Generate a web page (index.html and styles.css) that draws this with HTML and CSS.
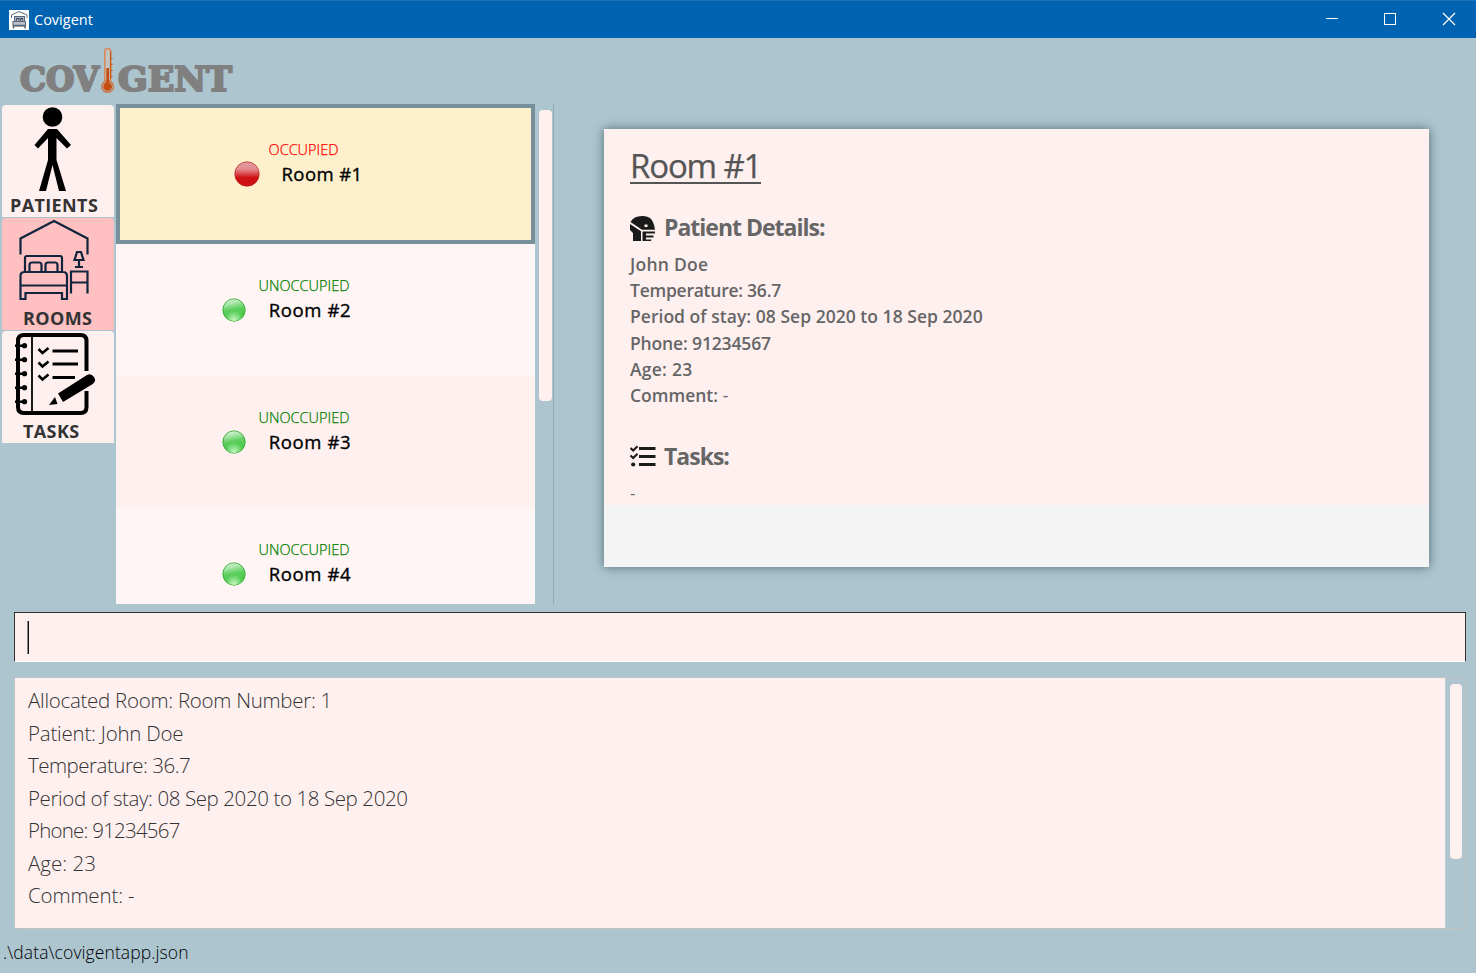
FILE: index.html
```html
<!DOCTYPE html>
<html lang="en">
<head>
<meta charset="utf-8">
<title>Covigent</title>
<link rel="stylesheet" href="styles.css">
</head>
<body>
<div class="window">
  <header class="titlebar">
    <svg class="app-icon" viewBox="0 0 20 20"><rect width="20" height="20" fill="#fff"/><g fill="none" stroke="#59687a" stroke-width="1"><path d="M2.500 8V5L10 1.500 18 5V8"/><rect x="5.500" y="6.500" width="10" height="5" fill="#aab1bc"/><path d="M7.500 10.500V8.500H10V10.500M11.500 10.500V8.500H13.500V10.500" stroke="#354558"/><rect x="4" y="11.500" width="12.500" height="4.500" fill="#bdc2ca"/><path d="M4.500 18.500V15.500H16V18.500" stroke-width="1.500"/></g></svg>
    <span class="app-name">Covigent</span>
    <svg class="controls" viewBox="0 0 120 14"><path d="M0 5.500H12" stroke="#fff"/><rect x="58.500" y=".5" width="11" height="11" fill="none" stroke="#fff"/><path d="M117 0L129 12M129 0L117 12" stroke="#fff" stroke-width="1.200"/></svg>
  </header>

  <div class="brand">
    <svg class="logo" viewBox="0 0 240 66" role="img" aria-label="Covigent">
      <g class="logo-text">
        <text x="20" y="53" textLength="79" lengthAdjust="spacingAndGlyphs">COV</text>
        <text x="118" y="53" textLength="114" lengthAdjust="spacingAndGlyphs">GENT</text>
      </g>
      <path d="M104.800 43V13.500a2.900 2.900 0 0 1 5.800 0V43" fill="#c0c4c2" stroke="#d98759" stroke-width="1.500"/>
      <path d="M110.600 20.500h2M110.600 26.500h2M110.600 32.500h2M110.600 38.500h2M110.600 13v28" stroke="#c8571b" stroke-width="1.200" fill="none"/>
      <circle cx="107.600" cy="48.500" r="5.800" fill="none" stroke="#cf713c" stroke-width="1.400"/>
      <circle cx="107.600" cy="48.500" r="4.400" fill="#c54f12"/>
      <path d="M107.700 30V47" stroke="#c54f12" stroke-width="2.800"/>
    </svg>
  </div>

  <main class="main">
    <nav class="nav">
      <div class="tab">
        <svg class="tab-art" viewBox="0 0 112 112"><circle cx="50.500" cy="12" r="9.800"/><path d="M46 24H55L69 40 65 43.500 54.500 33V55L64 86H57L50.500 60 44 86H37L46 55V33L36 43.500 32.500 40Z"/></svg>
        <span class="tab-label patients">PATIENTS</span>
      </div>
      <div class="tab selected">
        <svg class="tab-art" viewBox="0 0 112 112" fill="none" stroke="#10243e" stroke-width="2.200"><path d="M18.500 36.500V20.500L52 3 85.500 20.500V36.500"/><path d="M23 54V40q0-2 2-2H58q2 0 2 2V54M27.500 54V47q0-2.500 2.500-2.500H37q2.500 0 2.500 2.500V54M43.500 54V47q0-2.500 2.500-2.500H53q2.500 0 2.500 2.500V54M18.500 81V58q0-4 4-4H61q4 0 4 4V81H60V75H23.500V81ZM18.500 67.500H65"/><path d="M69 75.500V53.500H85.500V75.500M69 64.500H85.500M77 41V49M73 49H81M72.500 42L75 34H79L81.500 42Z"/></svg>
        <span class="tab-label rooms">ROOMS</span>
      </div>
      <div class="tab">
        <svg class="tab-art" viewBox="0 0 112 112"><path d="M84.500 40V10Q84.500 4 78.500 4H22Q16 4 16 10V76Q16 82 22 82H78.500Q84.500 82 84.500 76V60" fill="none" stroke="#000" stroke-width="4"/><path d="M30 4V82" stroke="#000" stroke-width="1.800"/><g fill="#000"><path d="M13 13.500H24V16H13zM13 27.500H24V30H13zM13 41.500H24V44H13zM13 55.500H24V58H13zM13 69.500H24V72H13z"/><circle cx="22.500" cy="14.700" r="2.600"/><circle cx="22.500" cy="28.700" r="2.600"/><circle cx="22.500" cy="42.700" r="2.600"/><circle cx="22.500" cy="56.700" r="2.600"/><circle cx="22.500" cy="70.700" r="2.600"/></g><path d="M36.500 18L40.500 22 46.500 17M36.500 31.500L40.500 35.500 46.500 30.500M36.500 44.500L40.500 48.500 46.500 43.500" stroke="#000" stroke-width="2.500" fill="none"/><path d="M50.500 20H76M50.500 33H76M50.500 46.500H73" stroke="#000" stroke-width="3"/><path d="M56 62.500L85 44Q89 42 92 46 95 50 90 53.500L61 71ZM53 66L47 74 55.500 73Z"/></svg>
        <span class="tab-label tasks">TASKS</span>
      </div>
    </nav>

    <section class="rooms-list">
      <article class="room current">
        <span class="status">OCCUPIED</span>
        <div class="room-row"><svg class="ball" viewBox="0 0 26 26"><defs><linearGradient id="r" x2="0" y2="1"><stop stop-color="#dfa0a4"/><stop offset=".3" stop-color="#e58b91"/><stop offset=".58" stop-color="#d22a2e"/><stop offset=".65" stop-color="#cc1013"/><stop offset="1" stop-color="#d01215"/></linearGradient></defs><circle cx="13" cy="13" r="12.200" fill="url(#r)" stroke="#b3191c" stroke-width=".7"/></svg><span class="room-name">Room #1</span></div>
      </article>
      <article class="room">
        <span class="status">UNOCCUPIED</span>
        <div class="room-row"><svg class="ball" viewBox="0 0 24 24"><defs><linearGradient id="g" x2=".2" y2="1"><stop stop-color="#e8f8e8"/><stop offset=".28" stop-color="#a8e6a8"/><stop offset=".55" stop-color="#5cce5c"/><stop offset="1" stop-color="#46c846"/></linearGradient><radialGradient id="h" cx=".5" cy=".95" r=".42"><stop stop-color="#c4f7c4"/><stop offset="1" stop-color="#c4f7c4" stop-opacity="0"/></radialGradient></defs><circle cx="12" cy="12" r="11.200" fill="url(#g)" stroke="#2da52d" stroke-width=".8"/><circle cx="12" cy="12" r="11" fill="url(#h)"/></svg><span class="room-name">Room #2</span></div>
      </article>
      <article class="room odd">
        <span class="status">UNOCCUPIED</span>
        <div class="room-row"><svg class="ball" viewBox="0 0 24 24"><circle cx="12" cy="12" r="11.200" fill="url(#g)" stroke="#2da52d" stroke-width=".8"/><circle cx="12" cy="12" r="11" fill="url(#h)"/></svg><span class="room-name">Room #3</span></div>
      </article>
      <article class="room">
        <span class="status">UNOCCUPIED</span>
        <div class="room-row"><svg class="ball" viewBox="0 0 24 24"><circle cx="12" cy="12" r="11.200" fill="url(#g)" stroke="#2da52d" stroke-width=".8"/><circle cx="12" cy="12" r="11" fill="url(#h)"/></svg><span class="room-name">Room #4</span></div>
      </article>
    </section>
    <div class="list-scroll"><div class="list-thumb"></div></div>

    <section class="detail">
      <div class="detail-body">
        <h1 class="detail-title"><span>Room #1</span></h1>
        <h2 class="detail-heading">
          <svg class="heading-icon" viewBox="0 0 26 26"><path fill="#1a1a1a" d="M.5 6Q3.500 0 12 0 19 0 21.500 3.500 24 7 25 13.800H12L.5 6ZM0 8L11 15.200V25H3V17L0 14ZM12.500 15.500H25V17.500H16V19.500H23.500V21.500H16V23.500H21.500L21 25H12.500Z"/><rect x="14.500" y="8.500" width="3" height="2.500" fill="#fff0f0"/></svg>
          <span>Patient Details:</span></h2>
        <div class="facts">
          <p class="f1">John Doe</p><p class="f2">Temperature: 36.7</p><p class="f3">Period of stay: 08 Sep 2020 to 18 Sep 2020</p><p class="f4">Phone: 91234567</p><p class="f5">Age: 23</p><p>Comment: <span class="dash">-</span></p>
        </div>
        <h2 class="detail-heading second">
          <svg class="heading-icon" viewBox="0 0 26 26"><path d="M9 5.500H25.500M9 13.500H25.500M9 21.500H25.500" stroke="#1a1a1a" stroke-width="2.800"/><path d="M.5 5L3.200 7.500 7.500 3.200M.5 12.500L3.200 15 7.500 10.800" fill="none" stroke="#1a1a1a" stroke-width="2"/><circle cx="3.200" cy="21.500" r="2.100" fill="#1a1a1a"/></svg>
          <span>Tasks:</span></h2>
        <p class="none">-</p>
      </div>
    </section>
  </main>

  <div class="command"><span class="caret"></span></div>

  <section class="result">
    <div class="result-text">
      <p class="r1">Allocated Room: Room Number: 1</p><p class="r2">Patient: John Doe</p><p class="r3">Temperature: 36.7</p><p class="r4">Period of stay: 08 Sep 2020 to 18 Sep 2020</p><p class="r5">Phone: 91234567</p><p>Age: 23</p><p class="r7">Comment: -</p>
    </div>
    <div class="result-scroll"><div class="result-thumb"></div></div>
  </section>
  <footer class="statusbar"><span>.\data\covigentapp.json</span></footer>
</div>
</body>
</html>
```
FILE: styles.css
```css
* { box-sizing: border-box; }
body { margin: 0; background: #adc5cf; font-family: "Open Sans", "Noto Sans", sans-serif; overflow: hidden; }
h1, h2, p { margin: 0; }
svg { display: block; flex: none; }
.window { width: 1476px; height: 973px; display: flex; flex-direction: column; }

.titlebar { height: 38px; background: #0063b1; border-top: 1px solid #1a73b9; display: flex; align-items: center; padding: 0 21px 0 9px; flex: none; }
.app-icon { width: 20px; height: 20px; }
.app-name { color: #fff; font-size: 14.5px; margin-left: 5px; line-height: 20px; }
.controls { width: 120px; height: 14px; margin-left: auto; margin-right: 9px; overflow: visible; }

.brand { height: 66px; flex: none; }
.logo { width: 240px; height: 66px; }
.logo-text { font: bold 33.5px "DejaVu Serif", serif; fill: #808080; stroke: #808080; stroke-width: 2.2; stroke-linejoin: round; }

.main { height: 500px; display: flex; flex: none; }
.nav { width: 116px; padding: 1px 2px 0; display: flex; flex-direction: column; gap: 1px; }
.tab { width: 112px; height: 112px; background: #fff0f0; border-radius: 4px 4px 0 0; display: grid; }
.tab.selected { background: #ffc0c1; }
.tab-art { width: 112px; height: 112px; grid-area: 1 / 1; }
.tab-label { grid-area: 1 / 1; align-self: end; font-size: 18px; font-weight: 700; line-height: 24px; color: #333; letter-spacing: .38px; }
.patients { padding-left: 8px; }
.rooms { padding-left: 21px; }
.tasks { padding-left: 21px; }

.rooms-list { width: 419px; overflow: hidden; display: flex; flex-direction: column; }
.room { height: 132px; flex: none; background: #fff5f4; display: flex; flex-direction: column; align-items: center; padding: 32px 43px 0 0; }
.room.odd { background: #fff0f0; }
.room.current { height: 140px; background: #fff0cd; border: 4px solid #78909c; padding: 32px 44px 0 0; }
.status { font-size: 14.5px; line-height: 20px; color: #008000; font-weight: 300; -webkit-text-stroke: .25px currentColor; }
.current .status { color: #f00; }
.room-row { display: flex; align-items: center; height: 28px; gap: 23px; margin-right: 35px; }
.current .room-row { gap: 22px; margin-right: 11px; }
.ball { width: 24px; height: 24px; }
.current .ball { width: 26px; height: 26px; }
.room-name { font-size: 18.5px; letter-spacing: .6px; line-height: 26px; color: #000; -webkit-text-stroke: .35px #000; }
.current .room-name { letter-spacing: .4px; }

.list-scroll { width: 19px; padding: 6px 1px 0 4px; border-right: 1px solid #8fadb6; }
.list-thumb { height: 291px; border-radius: 4px; background: #fff0f0; }

.detail { margin: 25px 0 0 50px; width: 825px; height: 438px; background: #f4f4f4; box-shadow: 0 0 10px rgba(30,60,60,.65); }
.detail-body { height: 376px; background: #fff0f0; padding: 15px 26px 0; color: #666; border-radius: 0 0 4px 4px; }
.detail-title { font-size: 33px; font-weight: 400; line-height: 44px; color: #555; letter-spacing: -1.15px; display: flex; -webkit-text-stroke: .25px #555; }
.detail-title span { height: 40px; border-bottom: 2px solid #555; }
.detail-heading { display: flex; align-items: center; gap: 8px; margin-top: 27px; height: 32px; font-size: 23px; letter-spacing: -1px; font-weight: 700; line-height: 32px; }
.detail-heading .heading-icon { margin-top: 3px; }
.heading-icon { width: 26px; height: 26px; }
.facts { margin-top: 8px; font-size: 17.500px; font-weight: 600; line-height: 26.200px; }
.f1 { letter-spacing: .25px; }
.f2 { letter-spacing: -.25px; }
.f3 { letter-spacing: .03px; }
.f4 { letter-spacing: -.15px; }
.f5 { letter-spacing: .25px; }
.dash, .none { font-weight: 400; }
.detail-heading.second { margin-top: 32px; }
.second .heading-icon { margin-top: 0; }
.none { font-size: 17px; line-height: 26px; margin-top: 8px; }

.command { flex: none; height: 50px; margin: 8px 10px 0 14px; background: #fff0f0; border: 1px solid #333; border-bottom: 1px solid #fff; padding: 8px 12px; }
.caret { display: block; width: 2px; height: 33px; border-right: 1px solid #111; background: #888; }

.result { flex: none; height: 252px; margin: 15px 10px 0 14px; border: 1px solid #c0c4c5; border-radius: 3px; display: flex; }
.result-text { flex: 1; background: #fff0f0; padding: 6px 13px; font-size: 20.500px; font-weight: 300; line-height: 32.500px; color: #333; }
.r1 { letter-spacing: -.28px; }
.r2 { letter-spacing: -.22px; }
.r3 { letter-spacing: -.5px; }
.r4 { letter-spacing: -.4px; }
.r5 { letter-spacing: -.78px; }
.r7 { letter-spacing: -.15px; }
.result-scroll { width: 20px; padding: 6px 3px 0 4px; border-left: 1px solid #c3cfd4; }
.result-thumb { height: 175px; border-radius: 4px; background: #fff0f0; }

.statusbar { height: 44px; padding: 10px 3px; font-size: 17.500px; letter-spacing: .1px; font-weight: 300; line-height: 26px; color: #000; }
```
